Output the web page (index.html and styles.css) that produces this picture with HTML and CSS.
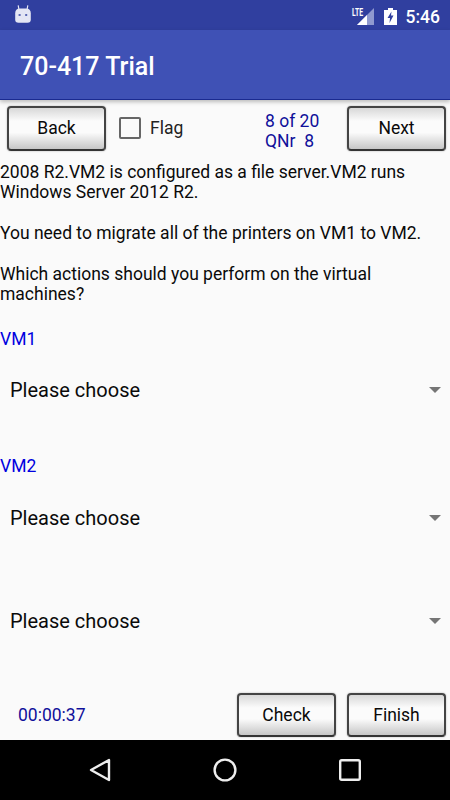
FILE: index.html
```html
<!DOCTYPE HTML>
<html>

<head>
    <meta charset="utf-8">
    <title>70-417 Trial</title>
    <link rel="stylesheet" href="styles.css">
</head>

<body>
    <div class="status">
        <svg class="cat" width="16" height="18" viewBox="0 0 16 18">
            <path fill="none" stroke="#e4e6f4" stroke-width="1.2" d="M4 5 L3.2 0.4 M12 5 L12.8 0.4" />
            <path fill="#e4e6f4" d="M0.2 8.5 Q0.2 3.6 5 3.6 H11 Q15.8 3.6 15.8 8.5 V14.5 Q15.8 17.8 12.5 17.8 H3.5 Q0.2 17.8 0.2 14.5 Z" />
            <rect x="3.6" y="9" width="2" height="2" fill="#5a68b4" />
            <rect x="10.2" y="9" width="2" height="2" fill="#5a68b4" />
        </svg>
        <div class="status-right">
            <svg width="24" height="20" viewBox="0 0 24 20">
                <path fill="#8f99cf" d="M23 2 V19 H6 Z" />
                <path fill="#fff" d="M16 9 V19 H6 Z" />
                <text x="1" y="9.5" class="lte" textLength="11" lengthAdjust="spacingAndGlyphs">LTE</text>
            </svg>
            <svg class="batt" width="13" height="17" viewBox="0 0 13 17">
                <path fill="#fff" d="M4 0 H9 V2 H13 V17 H0 V2 H4 Z" />
                <path fill="#303f9f" d="M7.5 3.5 L3.5 10 H6 L5.5 15 L9.5 7.5 H7 Z" />
            </svg>
            <span class="time">5:46</span>
        </div>
    </div>
    <div class="appbar">70-417 Trial</div>

    <div class="main">
        <div class="toprow">
            <a class="btn">Back</a>
            <span class="box"></span>
            <span class="flag">Flag</span>
            <div class="count">8 of 20<br>QNr&nbsp; 8</div>
            <a class="btn">Next</a>
        </div>

        <div class="question">
            <p>2008 R2.VM2 is configured as a file server.VM2 runs Windows Server 2012 R2.</p>
            <p>You need to migrate all of the printers on VM1 to VM2.</p>
            <p>Which actions should you perform on the virtual machines?</p>
        </div>

        <div class="label first">VM1</div>
        <div class="choose">Please choose<i></i></div>
        <div class="label">VM2</div>
        <div class="choose second">Please choose<i></i></div>
        <div class="choose last">Please choose<i></i></div>

        <div class="bottomrow">
            <span class="timer">00:00:37</span>
            <a class="btn">Check</a>
            <a class="btn">Finish</a>
        </div>
    </div>

    <div class="nav">
        <svg width="22" height="24" viewBox="0 0 22 24">
            <path fill="none" stroke="#eee" stroke-width="2.4" stroke-linejoin="round" d="M20 2 V22 L2 12 Z" />
        </svg>
        <svg width="24" height="24" viewBox="0 0 24 24">
            <circle cx="12" cy="12" r="10.4" fill="none" stroke="#eee" stroke-width="2.4" />
        </svg>
        <svg width="22" height="22" viewBox="0 0 22 22">
            <rect x="1.2" y="1.2" width="19.6" height="19.6" rx="1.5" fill="none" stroke="#eee" stroke-width="2.4" />
        </svg>
    </div>
</body>

</html>
```

FILE: styles.css
```css
* {
    margin: 0;
    padding: 0;
    box-sizing: border-box;
}

body {
    width: 450px;
    height: 800px;
    overflow: hidden;
    display: flex;
    flex-direction: column;
    font-family: Roboto, "Liberation Sans", sans-serif;
    font-size: 17.5px;
    line-height: 20px;
    color: #0a0a0a;
    background: #fafafa;
}

.status {
    height: 30px;
    flex: none;
    display: flex;
    align-items: flex-start;
    justify-content: space-between;
    padding: 5px 10px 0 15px;
    background: #303f9f;
}

.status-right {
    display: flex;
    align-items: center;
}

.lte {
    font-family: Roboto, sans-serif;
    font-size: 11px;
    font-weight: 700;
    fill: #fff;
}

.batt {
    margin-left: 9px;
}

.time {
    margin-left: 9px;
    margin-top: 2px;
    font-size: 17.5px;
    font-weight: 500;
    color: #fff;
}

.appbar {
    height: 70px;
    flex: none;
    padding: 4px 20px 0;
    display: flex;
    align-items: center;
    font-size: 25px;
    font-weight: 500;
    color: #fff;
    background: #3f51b5;
    border-bottom: 1px solid #1a2a90;
    box-shadow: 0 2px 4px rgba(0, 0, 0, 0.25);
}

.main {
    flex: 1;
    display: flex;
    flex-direction: column;
    padding-top: 5px;
    overflow: hidden;
}

.toprow,
.bottomrow {
    display: flex;
    align-items: center;
    padding: 0 4px 0 7px;
    flex: none;
}

.btn {
    width: 99px;
    height: 45px;
    flex: none;
    display: flex;
    align-items: center;
    justify-content: center;
    color: #0a0a0a;
    border: 2px solid #444;
    border-bottom-color: #333;
    border-radius: 4px;
    background: linear-gradient(#d8d8d8, #fbfbfb 32%, #fbfbfb 60%, #c6c6c6);
    box-shadow: 0 0 2px rgba(0, 0, 0, 0.3);
}

.box {
    width: 22px;
    height: 22px;
    margin-left: 13px;
    border: 2px solid #666;
    border-radius: 2px;
}

.flag {
    margin-left: 9px;
    color: #222;
}

.count {
    margin-left: auto;
    margin-right: 27px;
    width: 55px;
    height: 40px;
    margin-top: 6px;
    color: #10109a;
    white-space: nowrap;
}

.question {
    margin-top: 11px;
}

.question p {
    margin-bottom: 21px;
}

.label {
    margin-top: 41px;
    color: #0000e0;
}

.label.first {
    margin-top: 4px;
}

.choose {
    height: 50px;
    margin-top: 16px;
    padding: 0 9px 0 10px;
    display: flex;
    align-items: center;
    justify-content: space-between;
    font-size: 20px;
    color: #0a0a0a;
}

.choose i {
    width: 0;
    height: 0;
    border-left: 6px solid transparent;
    border-right: 6px solid transparent;
    border-top: 6px solid #757575;
}

.choose.second {
    margin-top: 17px;
}

.choose.last {
    margin-top: 53px;
}

.bottomrow {
    margin-top: auto;
    margin-bottom: 3px;
    gap: 11px;
}

.bottomrow .btn {
    height: 44px;
}

.timer {
    margin-left: 11px;
    margin-right: auto;
    color: #10109a;
}

.nav {
    height: 60px;
    flex: none;
    padding: 0 89px;
    display: flex;
    align-items: center;
    justify-content: space-between;
    background: #000;
}
```
